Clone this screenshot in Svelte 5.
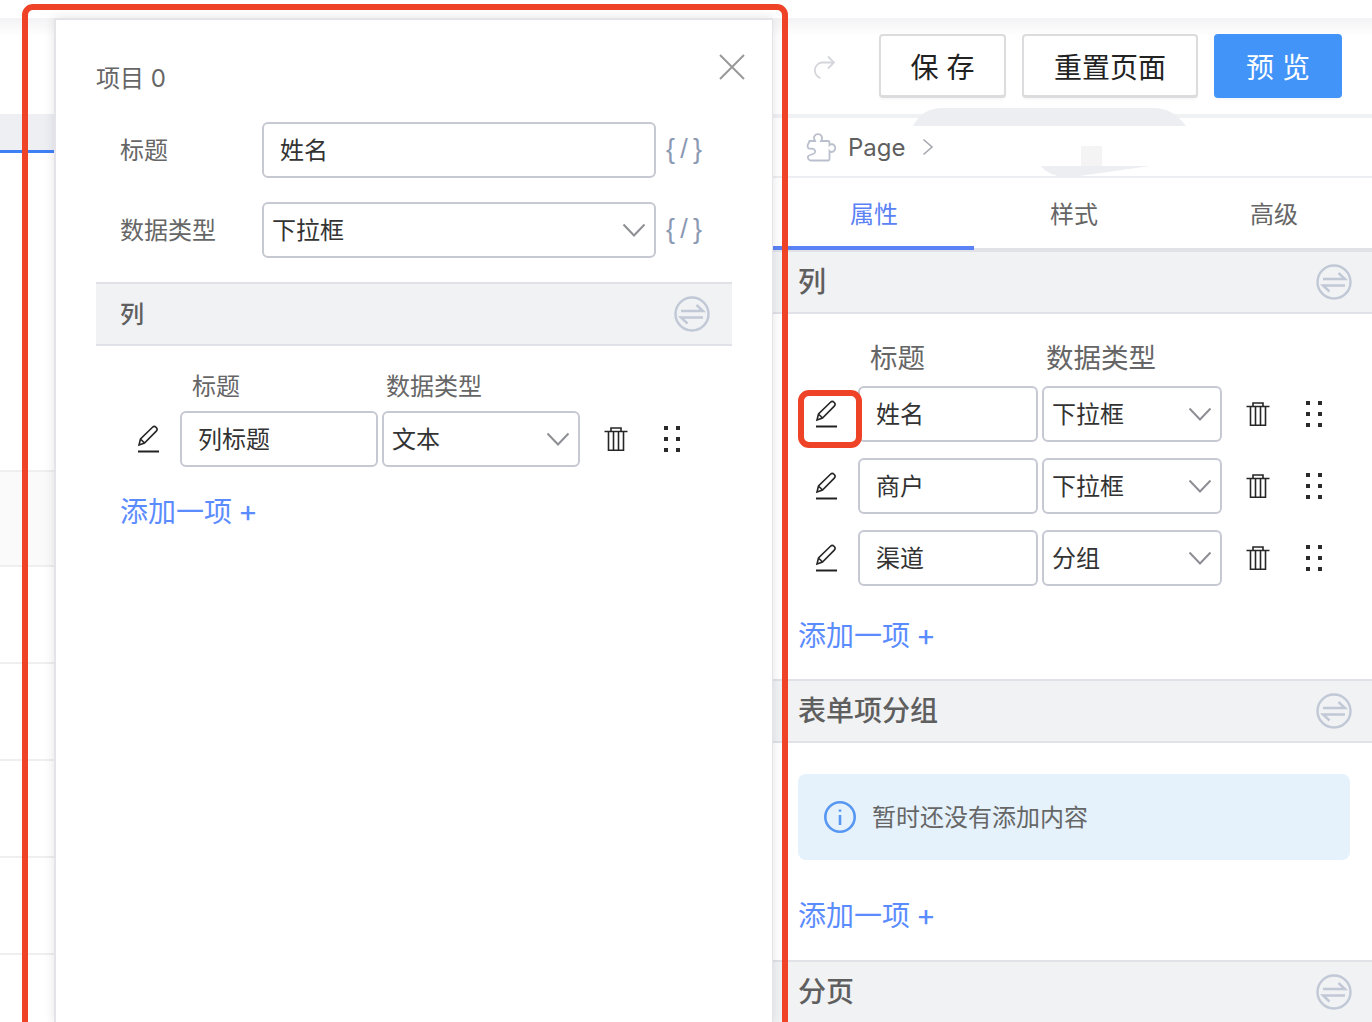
<script>
  const drawerRows = [{ title: '列标题', type: '文本' }];
  const panelRows = [
    { title: '姓名', type: '下拉框' },
    { title: '商户', type: '下拉框' },
    { title: '渠道', type: '分组' }
  ];
  const leftRows = [0, 1, 2, 3, 4, 5];
</script>

{#snippet chevron()}
  <svg class="chev" viewBox="0 0 24 14" width="24" height="14"><path d="M1.500 1.500 12 12.500 22.500 1.500" /></svg>
{/snippet}

{#snippet swap()}
  <svg class="swap" viewBox="0 0 36 36" width="36" height="36">
    <circle cx="18" cy="18" r="16.500" />
    <path d="M7 15h22l-6.500-6M29 21.500H7l6.500 6" />
  </svg>
{/snippet}

{#snippet codeMark()}
  <span class="code">{'{'}<i>/</i>{'}'}</span>
{/snippet}

{#snippet rows(list)}
  {#each list as row}
    <div class="row">
      <span class="tool pencil">
        <svg viewBox="0 0 24 28" width="24" height="28">
          <path class="thin" d="M3 20 4.500 14 16.500 2.300a2.500 2.500 0 0 1 3.500 0l.3.300a2.500 2.500 0 0 1 0 3.500L8.500 18 3 20zM4.500 14l4 4" />
          <path class="under" d="M2 26.500h21" />
        </svg>
      </span>
      <div class="field cell">{row.title}</div>
      <div class="field select cell">{row.type}{@render chevron()}</div>
      <span class="tool trash">
        <svg viewBox="0 0 24 24" width="24" height="24">
          <path class="thin" d="M0.500 4.500h23M7 4.500V1h10v3.500M4.500 4.500V23.200h15V4.500M9.500 4.500V23M14.500 4.500V23" />
        </svg>
      </span>
      <span class="tool dots">
        <svg viewBox="0 0 16 26" width="16" height="26">
          <rect x="0" y="0" width="4" height="4" /><rect x="12" y="0" width="4" height="4" />
          <rect x="0" y="11" width="4" height="4" /><rect x="12" y="11" width="4" height="4" />
          <rect x="0" y="22" width="4" height="4" /><rect x="12" y="22" width="4" height="4" />
        </svg>
      </span>
    </div>
  {/each}
{/snippet}

<div class="page">
  <aside class="backdrop">
    <div class="back-head"></div>
    <div class="back-band"></div>
    <div class="back-gap"></div>
    {#each leftRows as i}
      <div class="back-row" class:shade={i === 0}></div>
    {/each}
  </aside>

  <section class="drawer">
    <header class="drawer-head">
      <span>项目 0</span>
      <svg class="close" viewBox="0 0 26 26" width="26" height="26"><path d="M1 1l24 24M25 1 1 25" /></svg>
    </header>

    <div class="form">
      <div class="form-row">
        <label for="t">标题</label>
        <div class="field wide" id="t">姓名</div>
        {@render codeMark()}
      </div>
      <div class="form-row">
        <label for="d">数据类型</label>
        <div class="field wide select" id="d">下拉框{@render chevron()}</div>
        {@render codeMark()}
      </div>
    </div>

    <div class="section-head drawer-section">
      <span>列</span>
      {@render swap()}
    </div>
    <div class="list drawer-list">
      <div class="cols"><span>标题</span><span>数据类型</span></div>
      {@render rows(drawerRows)}
      <div class="add">添加一项 <b>+</b></div>
    </div>
  </section>

  <main class="panel">
    <div class="toolbar">
      <svg class="redo" viewBox="0 0 24 24" width="24" height="24">
        <path d="M23 7.500H10.500a8 8 0 0 0-1 15.500M17 1.500l6 6-6 6" />
      </svg>
      <button class="btn save">保 存</button>
      <button class="btn reset">重置页面</button>
      <button class="btn primary">预 览</button>
    </div>

    <div class="crumb">
      <svg class="puzzle" viewBox="0 0 30 30" width="30" height="30">
        <path d="M3.500 9H9C8 7 7.500 5.500 8.500 4c1.500-2.500 5.500-2.500 7 0 .8 1.500.5 3.500-.5 5h7c1 0 1.500.5 1.500 1.500V13c1.500-1.500 4.500-1 5.500 1.500 1 2.500-1 5.500-3.500 5.500-.7 0-1.500-.4-2-1v8c0 1-.5 1.500-1.500 1.500H5c-2 0-3.500-2-3-4 .5-2 6-1.500 7-4 .5-1.500-.5-3.500-2-3.700L2.500 16.500c-1.200-1.500-1.200-3.500.2-5.500L3.500 9z" />
      </svg>
      <span class="page-name">Page</span>
      <svg class="crumb-arrow" viewBox="0 0 12 18" width="12" height="18"><path d="M1.500 1.500 10 9l-8.500 7.500" /></svg>
    </div>

    <nav class="tabs">
      <span class="tab active">属性</span>
      <span class="tab">样式</span>
      <span class="tab">高级</span>
    </nav>

    <div class="section-head">
      <span>列</span>
      {@render swap()}
    </div>
    <div class="list panel-list">
      <div class="cols"><span>标题</span><span>数据类型</span></div>
      {@render rows(panelRows)}
      <div class="add">添加一项 <b>+</b></div>
    </div>

    <div class="section-head">
      <span>表单项分组</span>
      {@render swap()}
    </div>
    <div class="list group-list">
      <div class="notice">
        <svg viewBox="0 0 32 32" width="32" height="32">
          <circle cx="16" cy="16" r="14.700" />
          <path d="M16 14v10" /><path class="dot" d="M16 8.500v2.200" />
        </svg>
        <span>暂时还没有添加内容</span>
      </div>
      <div class="add">添加一项 <b>+</b></div>
    </div>

    <div class="section-head last">
      <span>分页</span>
      {@render swap()}
    </div>

    <svg class="ghost" viewBox="0 0 280 70" width="280" height="70">
      <path class="ghost-a" d="M2 18C8 6 18 0 32 0H242c14 0 24 6 33 18z" />
      <rect class="ghost-b" x="170" y="38" width="21" height="21" />
      <path class="ghost-a" d="M130 58H239L161 69c-14 1-26-4-31-11z" />
    </svg>
  </main>

  <div class="mark big"></div>
  <div class="mark small"></div>
</div>

<style>
  :global(body) {
    margin: 0;
    background: #fff;
  }
  .page {
    position: relative;
    display: flex;
    width: 1372px;
    height: 1022px;
    overflow: hidden;
    background: #fff;
    font-family: Inter, "Noto Sans CJK SC", sans-serif;
    color: #666;
  }

  /* page behind the drawer */
  .backdrop {
    width: 54px;
    flex: none;
    padding-top: 18px;
    box-sizing: border-box;
  }
  .back-head {
    height: 96px;
    background: linear-gradient(#f3f3f5, #fff 18px);
  }
  .back-band {
    height: 39px;
    box-sizing: border-box;
    background: #eeeff3;
    border-bottom: 3px solid #3f7ff6;
  }
  .back-gap {
    height: 317px;
  }
  .back-row {
    height: 97px;
    box-sizing: border-box;
    border-top: 2px solid #efefef;
    background: #fff;
  }
  .back-row.shade {
    height: 95px;
    background: #fafafa;
  }

  /* drawer */
  .drawer {
    position: relative;
    z-index: 2;
    width: 719px;
    flex: none;
    margin-top: 18px;
    box-sizing: border-box;
    padding-left: 40px;
    padding-right: 40px;
    background: #fff;
    border: 2px solid #e4e4e8;
    border-right-width: 1px;
    border-bottom: 0;
    box-shadow: 0 0 10px rgba(40, 40, 60, 0.12);
  }
  .drawer-head {
    height: 102px;
    box-sizing: border-box;
    padding-top: 43px;
    display: flex;
    justify-content: space-between;
    align-items: flex-start;
    font-size: 24px;
    line-height: 32px;
    color: #666;
  }
  .close {
    margin: -9px -13px 0 0;
  }
  .close path {
    fill: none;
    stroke: #999;
    stroke-width: 2;
  }
  .form {
    display: flex;
    flex-direction: column;
    gap: 24px;
    padding-left: 24px;
  }
  .form-row {
    display: flex;
    align-items: center;
    height: 56px;
    font-size: 24px;
  }
  .form-row label {
    width: 142px;
    flex: none;
    color: #666;
    padding-bottom: 4px;
  }
  .field {
    position: relative;
    height: 56px;
    box-sizing: border-box;
    border: 2px solid #c6c9d1;
    border-radius: 6px;
    background: #fff;
    display: flex;
    align-items: center;
    padding: 0 0 4px 16px;
    font-size: 24px;
    color: #333;
  }
  .field.select {
    padding-left: 8px;
  }
  .field.wide {
    width: 394px;
    flex: none;
  }
  .chev {
    position: absolute;
    right: 8px;
    top: 19px;
  }
  .chev path {
    fill: none;
    stroke: #8d8f94;
    stroke-width: 2;
  }
  .code {
    margin-left: 10px;
    width: 36px;
    padding-bottom: 2px;
    display: flex;
    justify-content: space-between;
    align-items: center;
    font-family: "Liberation Sans", sans-serif;
    font-size: 27px;
    color: #8c99b3;
  }
  .code i {
    font-style: normal;
  }

  /* collapsible section bars */
  .section-head {
    height: 64px;
    box-sizing: border-box;
    display: flex;
    align-items: center;
    justify-content: space-between;
    padding: 0 20px 0 25px;
    background: #f1f2f4;
    border-top: 2px solid #e1e2e7;
    border-bottom: 2px solid #e1e2e7;
    font-size: 28px;
    font-weight: 500;
    color: #5f5f5f;
  }
  .section-head span {
    padding-bottom: 4px;
  }
  .section-head.last {
    border-bottom: 0;
    height: 62px;
  }
  .drawer-section {
    margin-top: 24px;
    padding: 0 22px 0 24px;
    font-size: 24px;
  }
  .swap {
    flex: none;
  }
  .swap circle,
  .swap path {
    fill: none;
    stroke: #c1c8d6;
    stroke-width: 2.400;
  }

  /* list rows */
  .list {
    display: flex;
    flex-direction: column;
  }
  .cols {
    display: flex;
    color: #666;
  }
  .row {
    display: flex;
    align-items: center;
    gap: 4px;
  }
  .cell {
    flex: none;
  }
  .tool {
    flex: none;
    display: flex;
    align-items: center;
    justify-content: center;
  }
  .pencil {
    width: 56px;
    height: 56px;
  }
  .trash {
    width: 40px;
    margin-left: 12px;
  }
  .dots {
    width: 40px;
    margin-left: 12px;
  }
  .thin {
    fill: none;
    stroke: #262626;
    stroke-width: 1.600;
  }
  .under {
    fill: none;
    stroke: #222;
    stroke-width: 2;
  }
  .dots rect {
    fill: #2a2a2a;
  }
  .add {
    height: 40px;
    font-size: 28px;
    line-height: 40px;
    color: #5b8cff;
  }
  .add b {
    font-weight: 400;
    font-size: 30px;
    line-height: 0;
    margin-left: -2px;
  }

  .drawer-list {
    padding-left: 24px;
    font-size: 24px;
  }
  .drawer-list .cols {
    padding-top: 24px;
    height: 41px;
    line-height: 34px;
    font-size: 24px;
  }
  .drawer-list .cols span:first-child {
    margin-left: 72px;
    width: 194px;
  }
  .drawer-list .cell {
    width: 198px;
  }
  .drawer-list .add {
    margin-top: 25px;
  }

  .panel-list {
    padding-left: 25px;
  }
  .panel-list .cols {
    padding-top: 24px;
    height: 48px;
    line-height: 40px;
    font-size: 27.500px;
  }
  .panel-list .cols span:first-child {
    margin-left: 72px;
    width: 176px;
  }
  .panel-list .cell {
    width: 180px;
  }
  .panel-list .row + .row {
    margin-top: 16px;
  }
  .panel-list .add {
    margin-top: 30px;
    margin-bottom: 23px;
  }

  .group-list {
    padding: 31px 22px 24px 25px;
  }
  .group-list .add {
    margin-top: 36px;
  }
  .notice {
    height: 86px;
    box-sizing: border-box;
    border-radius: 8px;
    background: #e5f2fc;
    display: flex;
    align-items: center;
    gap: 16px;
    padding-left: 26px;
    font-size: 24px;
    color: #666;
  }
  .notice span {
    padding-bottom: 4px;
  }
  .notice svg {
    flex: none;
  }
  .notice circle,
  .notice path {
    fill: none;
    stroke: #5797f2;
    stroke-width: 2.600;
  }

  /* right panel */
  .panel {
    position: relative;
    flex: 1;
    min-width: 0;
  }
  .toolbar {
    box-sizing: border-box;
    margin-top: 18px;
    height: 100px;
    display: flex;
    align-items: flex-start;
    padding-top: 16px;
    background: linear-gradient(#f3f3f5, #fff 18px);
    border-bottom: 4px solid #f0f1f3;
  }
  .redo {
    margin: 21px 44px 0 38px;
    flex: none;
  }
  .redo path {
    fill: none;
    stroke: #d4d6db;
    stroke-width: 1.800;
  }
  .btn {
    height: 64px;
    box-sizing: border-box;
    border: 2px solid #dcdcde;
    border-bottom-width: 3px;
    border-radius: 4px;
    background: #fff;
    font-family: inherit;
    font-size: 28px;
    color: #222;
    padding: 0;
    box-shadow: 0 2px 2px rgba(0, 0, 0, 0.03);
  }
  .save {
    width: 127px;
  }
  .reset {
    width: 176px;
    margin-left: 16px;
  }
  .primary {
    width: 128px;
    margin-left: 16px;
    background: #4394f8;
    border-color: #4394f8;
    color: #fff;
  }
  .crumb {
    height: 60px;
    box-sizing: border-box;
    display: flex;
    align-items: center;
    padding-left: 33px;
    border-bottom: 2px solid #eceef1;
  }
  .puzzle {
    flex: none;
  }
  .puzzle path {
    fill: none;
    stroke: #b9bfcc;
    stroke-width: 1.800;
  }
  .page-name {
    margin-left: 12px;
    font-size: 24px;
    color: #5f5f5f;
  }
  .crumb-arrow {
    margin-left: 16px;
  }
  .crumb-arrow path {
    fill: none;
    stroke: #a5a8b0;
    stroke-width: 1.600;
  }
  .tabs {
    display: flex;
    height: 72px;
    box-sizing: border-box;
    border-bottom: 2px solid #e1e2e7;
  }
  .tab {
    flex: none;
    width: 200px;
    height: 72px;
    box-sizing: border-box;
    text-align: center;
    font-size: 24px;
    line-height: 74px;
    color: #666;
  }
  .tab:first-child {
    width: 201px;
    padding-left: 1px;
  }
  .tab.active {
    color: #5b82f5;
    border-bottom: 4px solid #5b82f5;
  }
  .ghost {
    position: absolute;
    left: 138px;
    top: 108px;
    pointer-events: none;
  }
  .ghost-a {
    fill: #eceef2;
  }
  .ghost-b {
    fill: #f4f4f5;
  }

  /* red annotations */
  .mark {
    position: absolute;
    box-sizing: border-box;
    border: 6px solid #ee4327;
    border-radius: 11px;
    z-index: 5;
  }
  .mark.big {
    left: 22px;
    top: 4px;
    width: 766px;
    height: 1040px;
  }
  .mark.small {
    left: 798px;
    top: 390px;
    width: 64px;
    height: 58px;
  }
</style>
